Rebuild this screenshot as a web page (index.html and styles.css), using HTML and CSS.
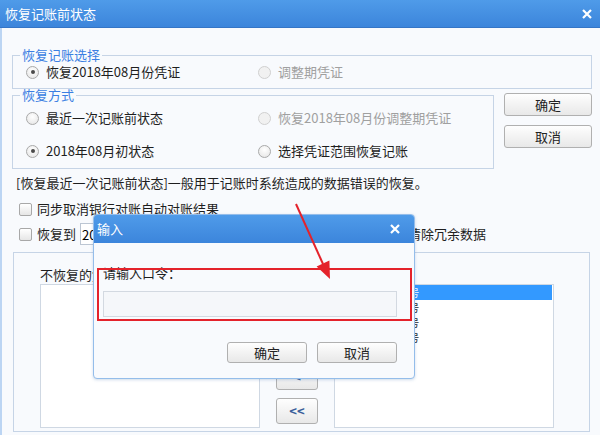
FILE: index.html
```html
<!DOCTYPE html>
<html>
    <head>
        <meta charset="utf-8">
        <title>恢复记账前状态</title>
        <link rel="stylesheet" href="styles.css">
    </head>
    <body>
        <div class="window">
            <div class="titlebar">
                <span>恢复记账前状态</span>
                <svg class="close" width="10" height="10" viewBox="0 0 10 10"><path d="M1 1L9 9M9 1L1 9" stroke="#fff" stroke-width="2.2"/></svg>
            </div>
            <div class="content">
                <fieldset class="group">
                    <legend>恢复记账选择</legend>
                    <div class="options">
                        <div class="option"><span class="radio checked"></span>恢复2018年08月份凭证</div>
                        <div class="option disabled"><span class="radio"></span>调整期凭证</div>
                    </div>
                </fieldset>
                <div class="mode-row">
                    <fieldset class="group group-mode">
                        <legend>恢复方式</legend>
                        <div class="options">
                            <div class="option"><span class="radio"></span>最近一次记账前状态</div>
                            <div class="option disabled"><span class="radio"></span>恢复2018年08月份调整期凭证</div>
                            <div class="option"><span class="radio checked"></span>2018年08月初状态</div>
                            <div class="option"><span class="radio"></span>选择凭证范围恢复记账</div>
                        </div>
                    </fieldset>
                    <div class="actions">
                        <button class="btn">确定</button>
                        <button class="btn">取消</button>
                    </div>
                </div>
                <p class="hint">[恢复最近一次记账前状态]一般用于记账时系统造成的数据错误的恢复。</p>
                <div class="check-row"><span class="checkbox"></span>同步取消银行对账自动对账结果</div>
                <div class="check-row tall">
                    <span class="checkbox"></span>恢复到
                    <input class="period" value="2018年08月">
                    <span class="purge">同时清除冗余数据</span>
                </div>
                <div class="panel">
                    <div class="list-col">
                        <div class="list-label">不恢复的凭证</div>
                        <div class="listbox"></div>
                    </div>
                    <div class="movers">
                        <button class="btn mover">&gt;</button>
                        <button class="btn mover">&gt;&gt;</button>
                        <button class="btn mover">&lt;</button>
                        <button class="btn mover">&lt;&lt;</button>
                    </div>
                    <div class="list-col">
                        <div class="list-label">恢复的凭证</div>
                        <div class="listbox">
                            <div class="item selected">记账凭证第0001号</div>
                            <div class="item">记账凭证第0002号</div>
                            <div class="item">记账凭证第0003号</div>
                            <div class="item">记账凭证第0004号</div>
                        </div>
                    </div>
                </div>
            </div>

            <div class="dialog">
                <div class="dialog-title">
                    <span>输入</span>
                    <svg class="close" width="10" height="10" viewBox="0 0 10 10"><path d="M1 1L9 9M9 1L1 9" stroke="#fff" stroke-width="2.2"/></svg>
                </div>
                <div class="dialog-body">
                    <div class="dialog-label">请输入口令：</div>
                    <input class="password" type="password">
                    <div class="dialog-actions">
                        <button class="btn wide">确定</button>
                        <button class="btn wide">取消</button>
                    </div>
                </div>
            </div>

            <div class="mark"></div>
            <svg class="arrow" width="600" height="435" viewBox="0 0 600 435">
                <line x1="296" y1="204" x2="323" y2="264" stroke="#e4222b" stroke-width="2"/>
                <polygon points="330,279 329.4,260.6 316.6,266.4" fill="#e4222b"/>
            </svg>
        </div>
    </body>
</html>
```

FILE: styles.css
```css
*{
    box-sizing: border-box;
}
body{
    margin: 0;
    font: 13px/1.2 "Noto Sans CJK SC", "Noto Sans", sans-serif;
    color: #1e1e1e;
    background-color: #f8fafd;
}
.window{
    position: relative;
    width: 600px;
    height: 435px;
    overflow: hidden;
    background-color: #f8fafd;
}
.titlebar{
    height: 28px;
    display: flex;
    align-items: center;
    justify-content: space-between;
    padding: 0 8px 0 5px;
    color: #fff;
    background: linear-gradient(#4f9be9, #3c85db);
    border-bottom: 1px solid #3575c6;
}
.content{
    height: 407px;
    border-left: 2px solid #bcd5f3;
    padding: 20px 8px 0 10px;
}

/* group boxes */
.group{
    margin: 0;
    padding: 0 0 6px 0;
    min-width: 0;
    border: 1px solid #c6d4e6;
}
.group legend{
    margin-left: 7px;
    padding: 0 2px;
    line-height: 14px;
    color: #3b7fe2;
}
.options{
    display: grid;
    grid-template-columns: 232px auto;
    grid-auto-rows: 20px;
    row-gap: 13px;
    padding-left: 13px;
}
.option{
    display: flex;
    align-items: center;
    gap: 7px;
    white-space: nowrap;
}
.option.disabled{
    color: #a0a0a0;
}
.radio{
    width: 13px;
    height: 13px;
    border-radius: 50%;
    border: 1px solid #a9a9a9;
    background: radial-gradient(circle at 50% 35%, #fff, #e3e3e3);
    display: flex;
    align-items: center;
    justify-content: center;
}
.radio.checked::after{
    content: "";
    width: 4px;
    height: 4px;
    border-radius: 50%;
    background-color: #4a4a4a;
}
.disabled .radio{
    border-color: #d0d0d0;
    background: #f1f1f1;
}

.mode-row{
    display: flex;
    margin-top: -1px;
}
.group-mode{
    width: 484px;
    padding-bottom: 7px;
}
.group-mode .options{
    margin-top: 6px;
}
.actions{
    display: flex;
    flex-direction: column;
    gap: 9px;
    margin: 5px 0 0 10px;
}

.btn{
    font: inherit;
    color: #222;
    border: 1px solid #b0b0b0;
    border-radius: 3px;
    background: linear-gradient(#fefefe, #e8e8e8);
    padding: 0;
}
.actions .btn{
    width: 88px;
    height: 23px;
}

.hint{
    margin: 6px 0 0 4px;
    line-height: 16px;
}
.check-row{
    display: flex;
    align-items: center;
    gap: 5px;
    height: 18px;
    margin-top: 9px;
    padding-left: 7px;
    white-space: nowrap;
}
.check-row.tall{
    height: 22px;
    margin-top: 5px;
}
.checkbox{
    width: 13px;
    height: 13px;
    border: 1px solid #a8a8a8;
    border-radius: 2px;
    background: linear-gradient(#fff, #e6e6e6);
}
.period{
    width: 110px;
    height: 22px;
    margin-left: -1px;
    padding: 0 1px;
    font: inherit;
    border: 1px solid #bcc6d3;
    background-color: #fff;
}
.purge{
    margin-left: 187px;
}

/* voucher lists */
.panel{
    display: flex;
    height: 180px;
    margin: 7px 2px 0 1px;
    padding: 14px 0 0 26px;
    border: 1px solid #c6d4e6;
}
.list-col{
    width: 220px;
    display: flex;
    flex-direction: column;
}
.list-label{
    line-height: 16px;
    margin-bottom: 1px;
}
.listbox{
    height: 144px;
    border: 1px solid #cfd8e3;
    background-color: #fff;
    font-size: 10px;
}
.item{
    line-height: 15px;
    margin: 0 1px;
    padding-left: 1px;
    white-space: nowrap;
}
.item.selected{
    background-color: #3399ff;
    color: #fff;
}
.movers{
    width: 74px;
    display: flex;
    flex-direction: column;
    align-items: center;
    justify-content: flex-end;
    gap: 8px;
    padding-bottom: 7px;
}
.mover{
    width: 42px;
    height: 26px;
    color: #3a5f9a;
    font-weight: bold;
}

/* password dialog */
.dialog{
    position: absolute;
    left: 93px;
    top: 214px;
    width: 322px;
    height: 165px;
    border: 1px solid #94bdea;
    border-radius: 4px;
    overflow: hidden;
    background-color: #f8fafd;
    box-shadow: 0 1px 3px rgba(60, 110, 170, 0.25);
}
.dialog-title{
    height: 28px;
    display: flex;
    align-items: center;
    justify-content: space-between;
    padding: 0 14px 0 3px;
    color: #fff;
    background: linear-gradient(#4f9be9, #3c85db);
}
.dialog-body{
    padding: 22px 17px 0 9px;
}
.dialog-label{
    line-height: 16px;
}
.password{
    display: block;
    width: 100%;
    height: 26px;
    margin-top: 10px;
    border: 1px solid #d3d9e1;
    background-color: #f5f7fa;
}
.dialog-actions{
    display: flex;
    justify-content: flex-end;
    gap: 10px;
    margin-top: 25px;
}
.btn.wide{
    width: 80px;
    height: 21px;
}

/* red annotation */
.mark{
    position: absolute;
    left: 97px;
    top: 268px;
    width: 315px;
    height: 53px;
    border: 2px solid #e4222b;
}
.arrow{
    position: absolute;
    left: 0;
    top: 0;
    pointer-events: none;
}
```
